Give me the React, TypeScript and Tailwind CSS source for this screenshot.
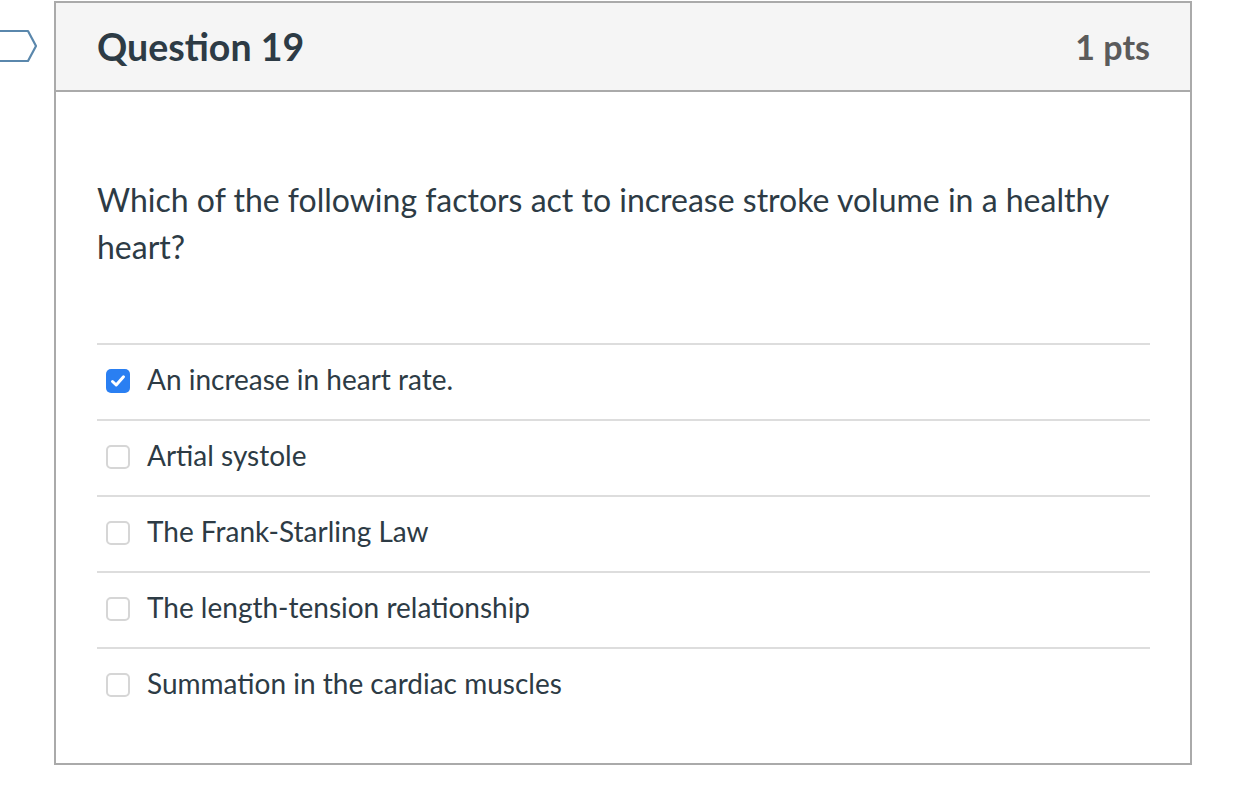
import React from "react";

const answers = [
  { text: "An increase in heart rate.", checked: true },
  { text: "Artial systole", checked: false },
  { text: "The Frank-Starling Law", checked: false },
  { text: "The length-tension relationship", checked: false },
  { text: "Summation in the cardiac muscles", checked: false },
];

function Box({ checked }: { checked: boolean }) {
  if (checked) {
    return (
      <div className="w-[24px] h-[24px] rounded-[5px] bg-[#2a7ff2] flex items-center justify-center shrink-0">
        <svg width="16" height="16" viewBox="0 0 16 16">
          <path d="M2.5 8.5 L6.2 12 L13.5 3.8" fill="none" stroke="white" strokeWidth="3" strokeLinecap="round" strokeLinejoin="round" />
        </svg>
      </div>
    );
  }
  return <div className="w-[24px] h-[24px] rounded-[5px] border-2 border-[#d6d6d6] bg-white shrink-0" />;
}

export default function App() {
  return (
    <div className="relative w-[1246px] h-[802px] bg-white" style={{ fontFamily: "Lato, 'Noto Sans', sans-serif" }}>
      <svg className="absolute left-0 top-[29px]" width="40" height="34" viewBox="0 0 40 34">
        <path d="M-4 2 H28 L36 17 L28 32 H-4" fill="none" stroke="#5a87ac" strokeWidth="2.2" strokeLinejoin="round" />
      </svg>
      <div className="pt-[1px] pl-[54px]">
        <div className="w-[1138px] border-2 border-[#aaaaaa]">
          <div className="h-[89px] bg-[#f5f5f5] border-b-2 border-[#aaaaaa] flex items-center justify-between pl-[41px] pr-[40px]">
            <div className="text-[37.5px] font-bold text-[#2d3b45] leading-none">Question 19</div>
            <div className="text-[34px] font-bold text-[#5b5b5b] leading-none">1 pts</div>
          </div>
          <div className="pl-[41px] pr-[40px] pt-[84px] pb-[40px]">
            <div className="text-[32px] leading-[47px] text-[#2d3b45]">
              Which of the following factors act to increase stroke volume in a healthy heart?
            </div>
            <div className="mt-[73px]">
              {answers.map((a, i) => (
                <div key={i} className="h-[76px] border-t-2 border-[#dddddd] flex items-center pl-[9px] pb-[3px]">
                  <Box checked={a.checked} />
                  <span className="ml-[17px] text-[28px] text-[#2d3b45] pb-[3px]">{a.text}</span>
                </div>
              ))}
            </div>
          </div>
        </div>
      </div>
    </div>
  );
}
